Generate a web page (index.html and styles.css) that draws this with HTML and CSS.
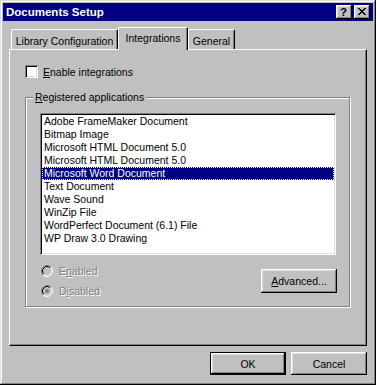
FILE: index.html
```html
<!DOCTYPE html>
<html>
<head>
<meta charset="utf-8">
<link rel="stylesheet" href="styles.css">
</head>
<body>
<div class="window">
  <div class="titlebar">
    <span class="title">Documents Setup</span>
    <span class="tbtn help">?</span>
    <span class="tbtn close"><svg width="8" height="7" viewBox="0 0 8 7"><path d="M0 0h2v1h-2zM6 0h2v1h-2zM1 1h2v1h-2zM5 1h2v1h-2zM2 2h4v1h-4zM3 3h2v1h-2zM2 4h4v1h-4zM1 5h2v1h-2zM5 5h2v1h-2zM0 6h2v1h-2zM6 6h2v1h-2z" fill="#000"/></svg></span>
  </div>
  <div class="body">
    <div class="tabs">
      <div class="tab t1">Library Configuration</div>
      <div class="tab t2 active">Integrations</div>
      <div class="tab t3">General</div>
    </div>
    <div class="panel">
      <div class="checkrow">
        <span class="checkbox"></span>
        <span class="label"><u>E</u>nable integrations</span>
      </div>
      <div class="group">
        <span class="legend"><u>R</u>egistered applications</span>
        <div class="listbox">
          <div class="item">Adobe FrameMaker Document</div>
          <div class="item">Bitmap Image</div>
          <div class="item">Microsoft HTML Document 5.0</div>
          <div class="item">Microsoft HTML Document 5.0</div>
          <div class="item selected">Microsoft Word Document</div>
          <div class="item">Text Document</div>
          <div class="item">Wave Sound</div>
          <div class="item">WinZip File</div>
          <div class="item">WordPerfect Document (6.1) File</div>
          <div class="item">WP Draw 3.0 Drawing</div>
        </div>
        <div class="lower">
          <div class="radios">
            <div class="radio">
              <svg width="12" height="12" viewBox="0 0 12 12"><path d="M2.11 9.89A5.5 5.5 0 0 1 9.89 2.11" stroke="#808080" fill="none"/><path d="M9.89 2.11A5.5 5.5 0 0 1 2.11 9.89" stroke="#fff" fill="none"/><path d="M2.82 9.18A4.5 4.5 0 0 1 9.18 2.82" stroke="#000" fill="none"/><path d="M9.18 2.82A4.5 4.5 0 0 1 2.82 9.18" stroke="#dfdfdf" fill="none"/></svg>
              <span class="dis">E<u>n</u>abled</span>
            </div>
            <div class="radio">
              <svg width="12" height="12" viewBox="0 0 12 12"><path d="M2.11 9.89A5.5 5.5 0 0 1 9.89 2.11" stroke="#808080" fill="none"/><path d="M9.89 2.11A5.5 5.5 0 0 1 2.11 9.89" stroke="#fff" fill="none"/><path d="M2.82 9.18A4.5 4.5 0 0 1 9.18 2.82" stroke="#000" fill="none"/><path d="M9.18 2.82A4.5 4.5 0 0 1 2.82 9.18" stroke="#dfdfdf" fill="none"/><circle cx="6" cy="6" r="2" fill="#808080"/></svg>
              <span class="dis">D<u>i</u>sabled</span>
            </div>
          </div>
          <div class="btn advanced"><span><u>A</u>dvanced...</span></div>
        </div>
      </div>
    </div>
    <div class="buttons">
      <div class="btn default">OK</div>
      <div class="btn">Cancel</div>
    </div>
  </div>
</div>
</body>
</html>
```
FILE: styles.css
```css
* { box-sizing: border-box; }
html, body { margin: 0; padding: 0; }
body {
  font-family: "Liberation Sans", Arial, sans-serif;
  font-size: 10.5px;
  color: #000;
  background: #c0c0c0;
}
.window {
  width: 376px;
  height: 385px;
  padding: 3px;
  background: #c0c0c0;
  box-shadow: inset -1px -1px 0 #000, inset 1px 1px 0 #dfdfdf, inset -2px -2px 0 #808080, inset 2px 2px 0 #fff;
  display: flex;
  flex-direction: column;
}
.titlebar {
  height: 18px;
  background: #000080;
  color: #fff;
  display: flex;
  align-items: center;
  padding: 0 3px 0 3px;
}
.title {
  font-weight: bold;
  font-size: 11.5px;
  flex: 1;
}
.tbtn {
  width: 16px;
  height: 14px;
  background: #c0c0c0;
  box-shadow: inset -1px -1px 0 #000, inset 1px 1px 0 #fff, inset -2px -2px 0 #808080, inset 2px 2px 0 #dfdfdf;
  display: flex;
  align-items: center;
  justify-content: center;
  color: #000;
}
.help {
  font-weight: bold;
  font-size: 11.5px;
  line-height: 14px;
  padding-right: 1px;
}
.close { margin-left: 2px; }
.close svg { display: block; margin-top: -1px; }
.body {
  padding: 6px 6px 0 6px;
  display: flex;
  flex-direction: column;
}
.tabs {
  display: flex;
  align-items: flex-end;
  height: 22px;
  padding-left: 2px;
  position: relative;
  z-index: 1;
}
.tab {
  height: 20px;
  padding-top: 3px;
  line-height: 16px;
  text-align: center;
  border-top: 1px solid #fff;
  border-left: 1px solid #fff;
  border-right: 1px solid #000;
  border-radius: 2px 2px 0 0;
  box-shadow: inset -1px 0 0 #808080;
  white-space: nowrap;
}
.t1 { width: 107px; }
.t2 { width: 70px; }
.t3 { width: 47px; }
.tab.active {
  height: 23px;
  margin-bottom: -1px;
  padding-top: 2px;
  line-height: 17px;
  background: #c0c0c0;
}
.panel {
  height: 297px;
  border: 1px solid;
  border-color: #fff #000 #000 #fff;
  box-shadow: inset -1px -1px 0 #808080;
  padding: 15px 16px 0 15px;
}
.checkrow {
  display: flex;
  align-items: center;
  height: 13px;
  gap: 5px;
}
.checkbox {
  width: 13px;
  height: 13px;
  background: #fff;
  box-shadow: inset 1px 1px 0 #808080, inset -1px -1px 0 #fff, inset 2px 2px 0 #000, inset -2px -2px 0 #dfdfdf;
}
.group {
  position: relative;
  margin-top: 19px;
  height: 210px;
  border: 1px solid #808080;
  box-shadow: inset 1px 1px 0 #fff, 1px 1px 0 #fff;
  padding: 15px 13px 0 14px;
}
.legend {
  position: absolute;
  top: -7px;
  left: 7px;
  padding: 0 2px;
  background: #c0c0c0;
  line-height: 13px;
}
.listbox {
  height: 142px;
  background: #fff;
  box-shadow: inset 1px 1px 0 #808080, inset -1px -1px 0 #fff, inset 2px 2px 0 #000, inset -2px -2px 0 #dfdfdf;
  padding: 2px 2px;
}
.item {
  height: 13px;
  line-height: 13px;
  padding-left: 2px;
  white-space: nowrap;
}
.item.selected {
  background: #000080;
  color: #fff;
  outline: 1px dotted #ffff80;
  outline-offset: -1px;
}
.lower {
  display: flex;
  justify-content: space-between;
  align-items: flex-start;
  margin-top: 10px;
}
.radios {
  display: flex;
  flex-direction: column;
  gap: 8px;
  padding-left: 1px;
}
.radio {
  display: flex;
  align-items: center;
  height: 12px;
  gap: 6px;
}
.radio svg { display: block; }
.dis {
  color: #808080;
  text-shadow: 1px 1px 0 #fff;
}
.btn {
  width: 76px;
  height: 23px;
  display: flex;
  align-items: center;
  justify-content: center;
  background: #c0c0c0;
  box-shadow: inset -1px -1px 0 #000, inset 1px 1px 0 #fff, inset -2px -2px 0 #808080, inset 2px 2px 0 #dfdfdf;
}
.advanced {
  height: 24px;
  margin-top: 4px;
  margin-right: -1px;
}
.buttons {
  display: flex;
  justify-content: flex-end;
  gap: 5px;
  margin-top: 6px;
}
.btn.default {
  border: 1px solid #000;
  box-shadow: inset -1px -1px 0 #000, inset 1px 1px 0 #fff, inset -2px -2px 0 #808080, inset 2px 2px 0 #dfdfdf;
}
```
